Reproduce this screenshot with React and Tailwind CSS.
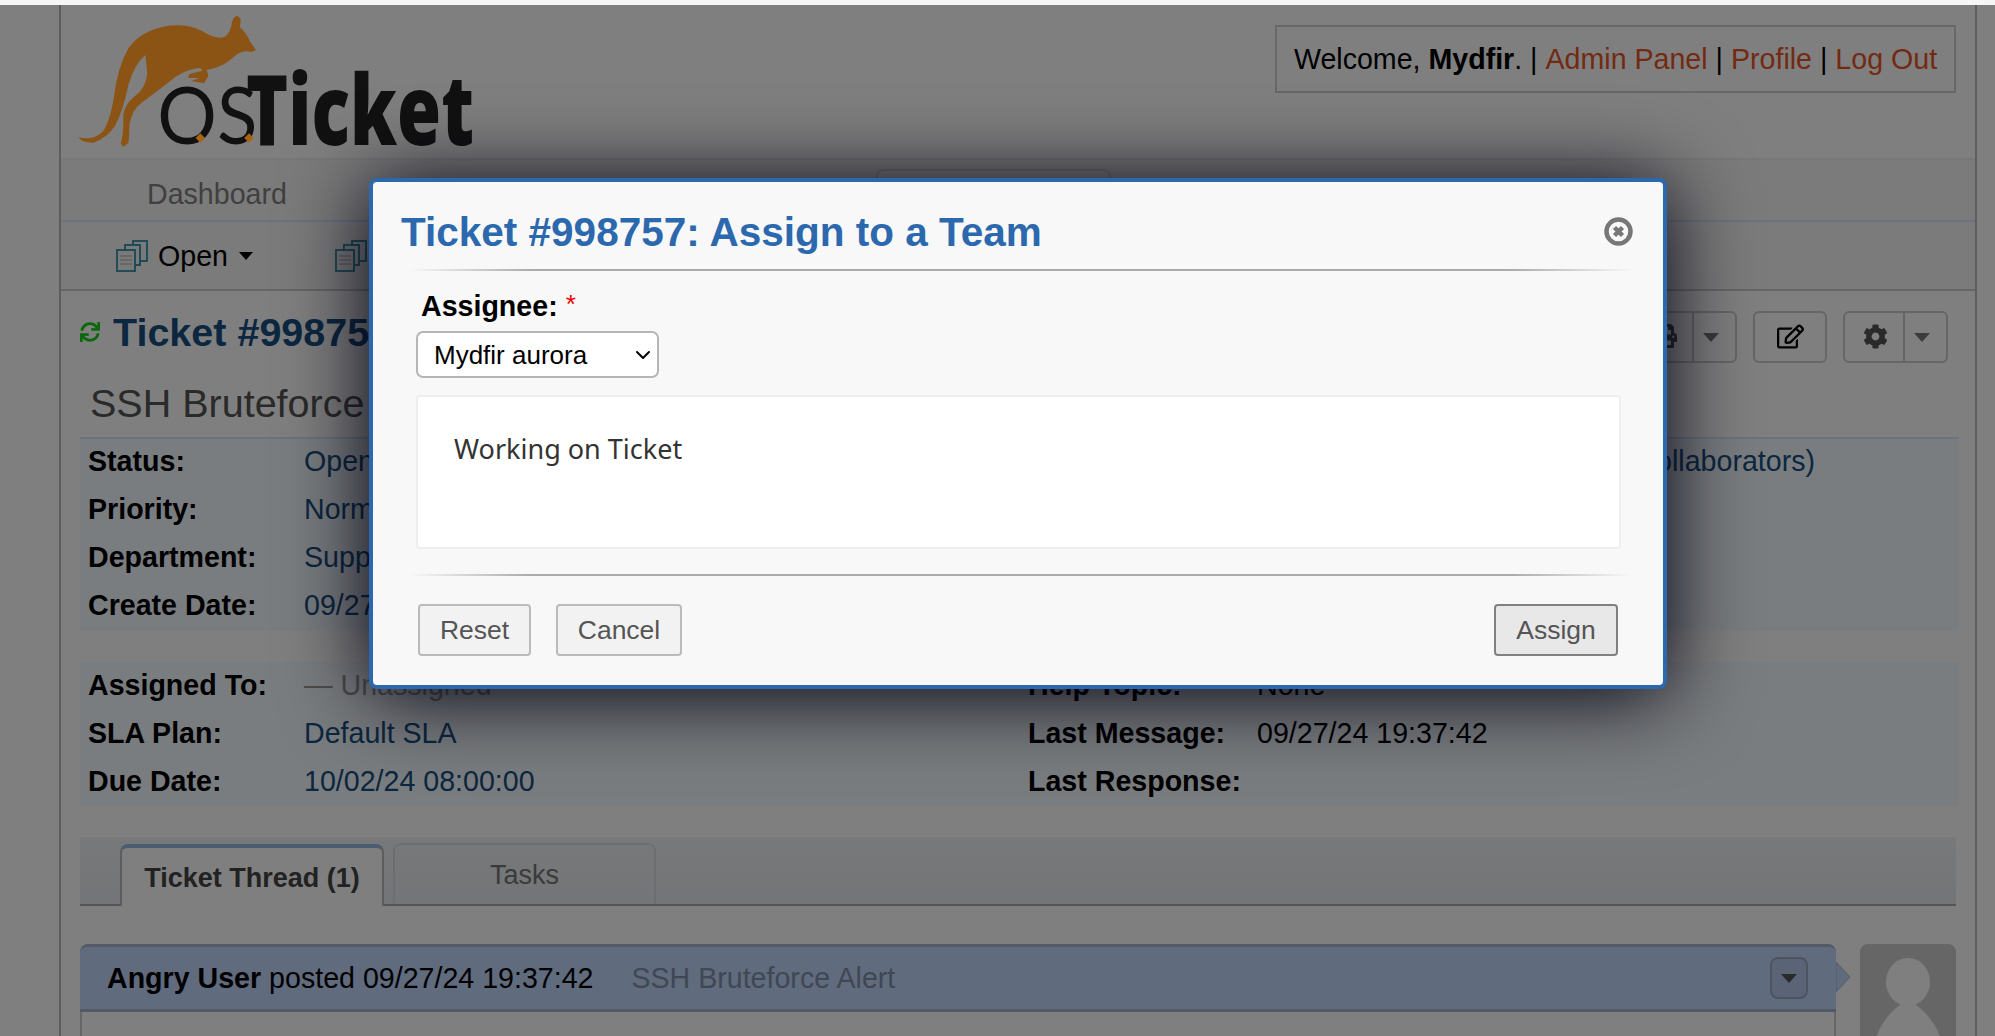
import { ChevronDown } from "lucide-react";
import { FaCog, FaPrint, FaRegEdit, FaSync } from "react-icons/fa";

function Caret({ className = "border-t-[#777]" }) {
  return <span className={`w-0 h-0 border-x-[8px] border-t-[9px] border-x-transparent ${className}`} />;
}

function Logo() {
  return (
    <svg width="440" height="158" viewBox="3 0 1320 474" className="relative z-10 shrink-0">
      <path
        fill="#8c5414"
        d="M55 412 Q100 422 128 395 Q150 365 162 290 Q172 205 205 145 Q240 95 310 80 Q375 68 425 92 Q465 118 492 112 Q512 100 516 65 Q528 35 542 58 L540 82 Q560 100 570 125 L588 150 L574 156 Q548 148 522 170 Q495 195 462 205 L440 210 L445 228 L432 250 L394 243 L418 234 L384 234 L388 222 L428 212 L420 204 Q385 205 345 232 Q300 268 245 308 Q215 330 208 375 Q208 415 205 428 L190 441 L182 430 Q192 400 190 345 Q192 315 225 288 Q258 265 262 220 L256 165 Q225 190 205 255 Q190 330 165 378 Q140 415 100 428 Q70 430 55 412 Z"
      />
      <text x="292" y="433" textLength="300" lengthAdjust="spacingAndGlyphs" fontFamily="Lato, sans-serif" fontWeight="400" fontSize="240" fill="#111">
        OS
      </text>
      <text x="558" y="436" textLength="684" lengthAdjust="spacingAndGlyphs" fontFamily="'Open Sans', sans-serif" fontWeight="800" fontSize="292" fill="#111">
        Ticket
      </text>
      <rect x="411" y="404" width="20" height="20" fill="#a86414" transform="rotate(45 421 414)" />
      <rect x="557" y="404" width="20" height="20" fill="#a86414" transform="rotate(45 567 414)" />
    </svg>
  );
}

function DocsIcon() {
  return (
    <svg width="32" height="32" viewBox="0 0 32 32" fill="#f4f4f4" stroke="#2f8fa8" strokeWidth="1.8">
      <rect x="17" y="1" width="14" height="20" />
      <rect x="9" y="5" width="15" height="20" />
      <rect x="1" y="10" width="18" height="21" />
      <path d="M4 16h12M4 20h12M4 24h12" strokeWidth="1.2" stroke="#aaa" />
    </svg>
  );
}

function InfoRow({ label, value, labelWidth = "w-[216px]", valueClass = "text-[#184e81]" }) {
  return (
    <div className="flex items-center h-[48px]">
      <span className={`font-bold text-black ${labelWidth}`}>{label}</span>
      <span className={valueClass}>{value}</span>
    </div>
  );
}

function Divider() {
  return <div className="h-[2px] ml-[37px] mr-[31px] bg-[linear-gradient(to_right,transparent,#aaa_10%,#aaa_90%,transparent)]" />;
}

function Modal() {
  return (
    <div className="absolute z-20 left-[369px] top-[178px] w-[1298px] h-[511px] bg-[#f8f8f8] border-4 border-[#2c68ad] rounded-[8px] shadow-[0_6px_84px_#000011]">
      <div className="flex justify-between items-center pt-[30px] pb-[17px] pl-[28px] pr-[30px]">
        <h1 className="text-[40.5px] leading-[40px] font-bold text-[#2c68ad]">Ticket #998757: Assign to a Team</h1>
        <svg width="29" height="29" viewBox="0 0 29 29" fill="none" stroke="#777" className="-mt-[1px]">
          <circle cx="14.5" cy="14.5" r="12" strokeWidth="4.5" />
          <path d="M10.5 10.5l8 8M18.5 10.5l-8 8" strokeWidth="4.5" />
        </svg>
      </div>
      <Divider />
      <div className="mt-[17px] ml-[48px] h-[36px] flex items-center gap-[8px]">
        <span className="font-bold text-black">Assignee:</span>
        <span className="text-[#e00] text-[26px] -mt-[4px]">*</span>
      </div>
      <div className="relative mt-[7px] ml-[43px] w-[243px] h-[47px]">
        <select
          defaultValue="aurora"
          className="appearance-none block w-full h-full pl-[16px] pt-[2px] text-[26px] text-black bg-white border-2 border-[#b5b5b5] rounded-[7px]"
        >
          <option value="aurora">Mydfir aurora</option>
        </select>
        <ChevronDown size={24} strokeWidth={2} className="absolute right-[4px] top-[12px] text-black pointer-events-none" />
      </div>
      <div className="mt-[17px] ml-[43px] w-[1205px] h-[154px] bg-white border-2 border-[#eeeeee] rounded-[4px] pl-[36px] pt-[34px] font-['Noto_Sans',sans-serif] text-[27px] leading-[36px] text-[#333]">
        Working on Ticket
      </div>
      <div className="mt-[25px]">
        <Divider />
      </div>
      <div className="mt-[28px] ml-[45px] mr-[45px] flex text-[26.5px] text-[#555]">
        <button className="w-[113px] h-[52px] pt-[1px] mr-[25px] bg-[#f2f2f2] border-2 border-[#bbbbbb] rounded-[4px]">Reset</button>
        <button className="w-[126px] h-[52px] pt-[1px] bg-[#f2f2f2] border-2 border-[#bbbbbb] rounded-[4px]">Cancel</button>
        <button className="w-[124px] h-[52px] pt-[1px] ml-auto bg-[#e8e8e8] border-2 border-[#808080] rounded-[4px]">Assign</button>
      </div>
    </div>
  );
}

export default function App() {
  return (
    <div className="relative h-screen overflow-hidden bg-white text-[28.6px] font-['Liberation_Sans',Arial,sans-serif]">
      <div className="ml-[59px] w-[1918px] h-[1036px] border-x-2 border-[#bbbbbb]">
        <header className="h-[158px] flex justify-between items-start">
          <Logo />
          <div className="mt-[25px] mr-[19px] w-[681px] h-[68px] border-2 border-[#d0d0d0] flex items-center justify-center text-black whitespace-pre">
            Welcome, <b>Mydfir</b>. | <a className="text-[#e65524]">Admin Panel</a> | <a className="text-[#e65524]">Profile</a> | <a className="text-[#e65524]">Log Out</a>
          </div>
        </header>

        <nav className="h-[62px] flex items-end pl-[86px] bg-[#f7f7f7] border-t-2 border-[#eeeeee] text-[#808080]">
          <span className="h-[60px] pt-[8px] flex items-center">Dashboard</span>
          <span className="ml-[589px] w-[235px] h-[51px] bg-white border-x-2 border-t-2 border-[#dddddd] rounded-t-[8px] flex items-center justify-center">Tickets</span>
        </nav>
        <div className="h-[71px] flex items-center pl-[55px] bg-[#f7f7f7] border-y-2 border-t-[#d8e6fc] border-b-[#cccccc] text-black">
          <DocsIcon />
          <span className="ml-[10px] pt-[2px]">Open</span>
          <Caret className="ml-[11px] !border-x-[7px] !border-t-[8px] border-t-black" />
          <span className="ml-[82px]"><DocsIcon /></span>
          <span className="ml-[11px]">Closed</span>
        </div>

        <main className="pl-[19px] pr-[16px]">
          <div className="h-[88px] flex justify-between items-start">
            <div className="mt-[21px] flex items-center text-[39.5px] leading-[40px] font-bold text-[#184e81]">
              <FaSync className="text-[20px] text-[#14d014] mr-[13px]" />
              Ticket #998757
            </div>
            <div className="mt-[20px] mr-[11px] flex gap-[16px] text-[#555]">
              <div className="flex h-[52px] w-[116px] border-2 border-[#cccccc] rounded-[6px]">
                <span className="w-[69px] pb-[2px] flex items-center justify-center"><FaPrint className="text-[24px] ml-[14px]" /></span>
                <span className="flex-1 pr-[8px] border-l-2 border-[#cccccc] flex items-center justify-center"><Caret /></span>
              </div>
              <div className="flex h-[52px] w-[74px] pb-[2px] border-2 border-[#cccccc] rounded-[6px] items-center justify-center">
                <FaRegEdit className="text-[27px] text-black" />
              </div>
              <div className="flex h-[52px] w-[105px] border-2 border-[#cccccc] rounded-[6px]">
                <span className="w-[58px] pl-[2px] pb-[2px] flex items-center justify-center"><FaCog className="text-[25px]" /></span>
                <span className="flex-1 pr-[8px] border-l-2 border-[#cccccc] flex items-center justify-center"><Caret /></span>
              </div>
            </div>
          </div>
          <h2 className="h-[58px] pl-[10px] pt-[1px] text-[39.5px] leading-[46px] text-[#555]">SSH Bruteforce Alert</h2>

          <section className="h-[194px] pl-[8px] border-t-2 border-[#d8e6fc] bg-[#f4faff] relative">
            <div className="-mt-[2px]">
              <InfoRow label="Status:" value="Open" />
              <InfoRow label="Priority:" value="Normal" />
              <InfoRow label="Department:" value="Support" />
              <InfoRow label="Create Date:" value="09/27/24 19:37:42" />
            </div>
            <span className="absolute -top-[2px] right-[144px] h-[48px] flex items-center text-[#184e81]">(0 Collaborators)</span>
          </section>

          <section className="mt-[31px] h-[144px] pl-[8px] bg-[#f4faff] grid grid-cols-[940px_1fr]">
            <div className="-mt-[1px]">
              <InfoRow label="Assigned To:" value="— Unassigned —" valueClass="text-[#999]" />
              <InfoRow label="SLA Plan:" value="Default SLA" />
              <InfoRow label="Due Date:" value="10/02/24 08:00:00" />
            </div>
            <div className="-mt-[1px]">
              <InfoRow label="Help Topic:" value="None" labelWidth="w-[229px]" valueClass="text-black" />
              <InfoRow label="Last Message:" value="09/27/24 19:37:42" labelWidth="w-[229px]" valueClass="text-black" />
              <InfoRow label="Last Response:" labelWidth="w-[229px]" />
            </div>
          </section>

          <div className="mt-[31px] w-[1876px] h-[69px] pl-[40px] flex items-end gap-[9px] border-b-2 border-[#aaaaaa] bg-gradient-to-b from-[#f0f2f4] to-[#e8eaf0]">
            <div className="w-[264px] h-[62px] pt-[3px] -mb-[2px] bg-white border-x-2 border-[#bbbbbb] border-t-4 border-t-[#98b8e0] rounded-t-[8px] flex items-center justify-center text-[27px] font-bold text-[#444]">
              Ticket Thread (1)
            </div>
            <div className="w-[263px] h-[61px] pt-[2px] border-x-2 border-t-2 border-[#dddddd] rounded-t-[8px] flex items-center justify-center text-[27px] text-[#777]">
              Tasks
            </div>
          </div>

          <div className="mt-[38px] w-[1876px] flex justify-between">
            <div className="relative w-[1756px]">
              <div className="h-[68px] pl-[27px] pr-[28px] flex items-center bg-[#c0d6fc] border-y-[3px] border-[#a4b4cc] rounded-t-[8px] text-black whitespace-pre">
                <b>Angry User</b> posted 09/27/24 19:37:42
                <span className="ml-[38px] text-[#808fa8]">SSH Bruteforce Alert</span>
                <span className="ml-auto w-[38px] h-[42px] bg-[#b4c8ec] border-2 border-[#98a8c4] rounded-[8px] flex items-center justify-center">
                  <Caret className="border-t-[#555]" />
                </span>
              </div>
              <svg width="15" height="30" viewBox="0 0 15 30" className="absolute left-[1756px] top-[18px]">
                <path d="M0 0L14 15L0 30Z" fill="#c0d6fc" stroke="#a4b4cc" strokeWidth="1" />
              </svg>
              <div className="h-[30px] border-x-2 border-[#cccccc] bg-white" />
            </div>
            <div className="w-[96px] h-[110px] bg-[#cccccc] rounded-[8px] overflow-hidden">
              <svg width="96" height="110" viewBox="0 0 96 110">
                <ellipse cx="48" cy="38" rx="22" ry="24" fill="#fff" />
                <path d="M12 110Q18 72 48 56Q78 72 85 110Z" fill="#fff" />
              </svg>
            </div>
          </div>
        </main>
      </div>

      <div className="absolute top-0 inset-x-0 h-[5px] bg-[#f6f6f6]" />
      <div className="absolute top-[5px] inset-x-0 bottom-0 bg-black/50" />
      <Modal />
    </div>
  );
}
